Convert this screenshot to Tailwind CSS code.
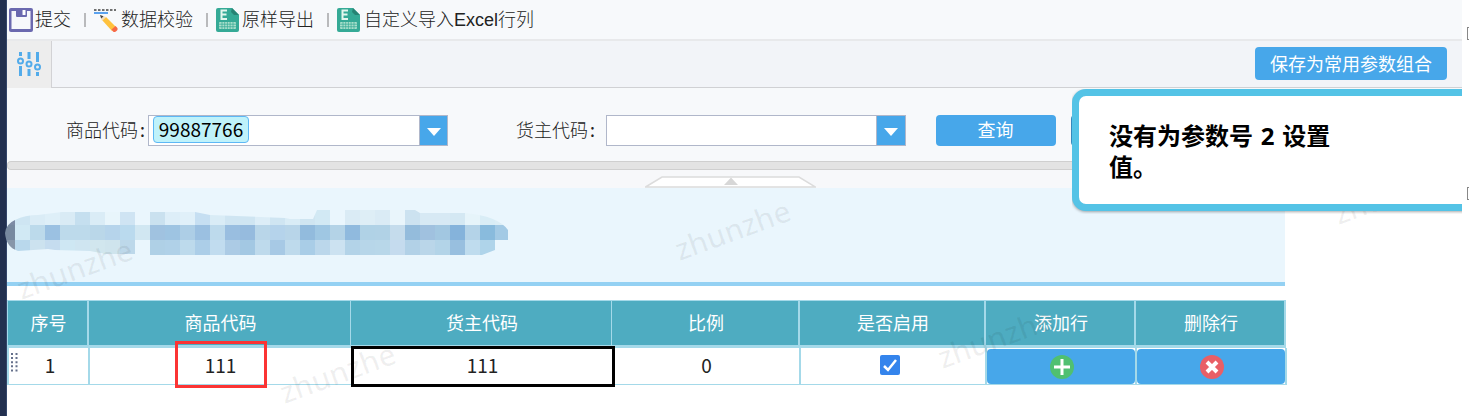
<!DOCTYPE html>
<html lang="zh"><head><meta charset="utf-8"><title>参数组合</title>
<script src="https://cdn.jsdelivr.net/npm/@tailwindcss/browser@4"></script></head>
<body class="bg-white font-['Noto_Sans','Noto_Sans_CJK_SC',sans-serif] text-[18px] text-[#222]">
<div class="relative flex h-[416px] w-[1469px] overflow-hidden bg-white">
  <div class="w-[7px] shrink-0 border-r border-[#34466a] bg-[#22304f]"></div>
  <main class="flex w-[1455px] shrink-0 flex-col">
    <header class="flex h-[41px] shrink-0 items-center border-b-2 border-[#e8e9eb] bg-[#f7f9fb] pl-[2px] font-['Liberation_Sans','Noto_Sans_CJK_SC',sans-serif] font-light leading-[24px]">
      <svg class="size-6 shrink-0" viewBox="0 0 24 24"><rect width="24" height="24" rx="2" fill="#6b69af"/><path d="M2.500 3V21H21.500V3H18V8Q18 9 17 9H8Q7 9 7 8V3Z" fill="#f7f8fb"/><rect x="13.500" y="2" width="3" height="5" rx=".5" fill="#fff"/></svg>
      <span class="ml-[2px] w-[49px] whitespace-nowrap">提交</span><i class="h-[14px] w-[2px] bg-[#b9babc]"></i>
      <svg class="ml-2 size-6 shrink-0" viewBox="0 0 24 24"><path d="M0 2H22" stroke="#444" stroke-width="1.500" stroke-dasharray="2.500 1.500"/><path d="M0 5H14" stroke="#5ba2ee" stroke-width="2"/><path d="M8 12L12 9 22 19 18 23Z" fill="#ffc23d"/><path d="M6 7L12 9 8 13Z" fill="#f2ddbf"/><path d="M6 7L9.500 8.200 7.200 10.500Z" fill="#444"/><path d="M17.500 21.500L21.500 18 23 19.500Q24.500 21 22.500 23T19 23.500Z" fill="#f66947"/></svg>
      <span class="ml-[3px] w-[85px] whitespace-nowrap">数据校验</span><i class="h-[14px] w-[2px] bg-[#b9babc]"></i>
      <svg class="ml-2 h-6 w-[23px] shrink-0" viewBox="0 0 23 24"><path d="M2 0H16L23 7V22Q23 24 21 24H2Q0 24 0 22V2Q0 0 2 0Z" fill="#35aa96"/><path d="M16 0L23 7H18L15 4Z" fill="#268374"/><path d="M11 2.500H5.500V11H11M5.500 6.500H10.500" fill="none" stroke="#e3f7ee" stroke-width="2"/><rect x="3" y="14" width="17" height="7" rx="1" fill="#a9dfcb"/><path d="M3 16.200H20M3 18.700H20M6 14V21M8.700 14V21M11.400 14V21M14.100 14V21M17 14V21" stroke="#35aa96" stroke-width=".7"/></svg>
      <span class="ml-[3px] w-[85px] whitespace-nowrap">原样导出</span><i class="h-[14px] w-[2px] bg-[#b9babc]"></i>
      <svg class="ml-2 h-6 w-[23px] shrink-0" viewBox="0 0 23 24"><path d="M2 0H16L23 7V22Q23 24 21 24H2Q0 24 0 22V2Q0 0 2 0Z" fill="#35aa96"/><path d="M16 0L23 7H18L15 4Z" fill="#268374"/><path d="M11 2.500H5.500V11H11M5.500 6.500H10.500" fill="none" stroke="#e3f7ee" stroke-width="2"/><rect x="3" y="14" width="17" height="7" rx="1" fill="#a9dfcb"/><path d="M3 16.200H20M3 18.700H20M6 14V21M8.700 14V21M11.400 14V21M14.100 14V21M17 14V21" stroke="#35aa96" stroke-width=".7"/></svg>
      <span class="ml-[4px] whitespace-nowrap">自定义导入Excel行列</span>
    </header>
    <div class="flex h-[47px] shrink-0">
      <div class="flex w-[45px] shrink-0 items-center justify-center border-r border-[#d2d2d5] bg-[#ededed]">
        <svg class="mb-[2px] size-6" viewBox="0 0 24 24" fill="none" stroke="#52abea" stroke-width="3"><path d="M3.500 0V4M3.500 14V24M12 0V7M12 17V24M20.500 0V10M20.500 20V24"/><g stroke-width="2"><circle cx="3.500" cy="9" r="2.500"/><circle cx="12" cy="12" r="2.500"/><circle cx="20.500" cy="15" r="2.500"/></g></svg>
      </div>
      <div class="flex flex-1 justify-end border-b border-[#d0d1d4] bg-[#f2f4f8] pr-[15px] pt-[6px]">
        <button class="h-[33px] w-[192px] rounded-[4px] bg-[#47a7ea] pt-[2px] text-white">保存为常用参数组合</button>
      </div>
    </div>
    <div class="flex h-[73px] shrink-0 items-start bg-[#f7f9fb] pt-[27px]">
      <label class="ml-[59px] w-[82px] whitespace-nowrap text-[18px] font-light leading-[30px]">商品代码<b class="ml-[2px] font-medium">:</b></label>
      <div class="flex h-[31px] w-[300px] border border-[#b0b7ca] bg-white">
        <div class="flex-1 pl-[4px]"><span class="flex h-[27px] w-[96px] items-center justify-center rounded-[4px] border border-[#5db8f5] bg-[#bff2fa] font-['Noto_Sans_CJK_SC',sans-serif] text-[19px] text-black">99887766</span></div>
        <div class="flex w-[28px] items-center justify-center border-l border-[#b0b7ca] bg-[#47a7ea]"><svg class="mt-[3px] h-[8px] w-[14px]" viewBox="0 0 14 8"><path d="M0 0H14L7 8Z" fill="white"/></svg></div>
      </div>
      <label class="ml-[68px] w-[90px] whitespace-nowrap text-[18px] font-light leading-[30px]">货主代码<b class="ml-[2px] font-medium">:</b></label>
      <div class="flex h-[31px] w-[300px] border border-[#b0b7ca] bg-white">
        <div class="flex-1"></div>
        <div class="flex w-[29px] items-center justify-center border-l border-[#b0b7ca] bg-[#47a7ea]"><svg class="mt-[3px] h-[8px] w-[14px]" viewBox="0 0 14 8"><path d="M0 0H14L7 8Z" fill="white"/></svg></div>
      </div>
      <button class="ml-[30px] h-[31px] w-[120px] rounded-[4px] bg-[#47a7ea] pr-px text-white">查询</button>
      <div class="ml-[15px] h-[31px] w-[120px] rounded-[4px] bg-[#3689bd]"></div>
    </div>
    <div class="h-[9px] shrink-0 rounded-l-[4px] border border-r-0 border-[#cfcfcf] bg-[#e3e3e3]"></div>
    <div class="flex h-[18px] shrink-0 items-end bg-[#f7f8fa] pl-[638px]">
      <svg class="h-[12px] w-[171px]" viewBox="0 0 171 12"><path d="M.5 11L17 1H154L170.500 11Z" fill="white" stroke="#dcdcdc" stroke-width="1.500"/><path d="M79 9L86 1.500 93 9Z" fill="#d7d7d7"/></svg>
    </div>
    <div class="h-[98px] w-[1278px] shrink-0 border-b-4 border-[#94d1f3] bg-[#eaf6fd]"></div>
    <section class="mt-[14px] w-[1280px] shrink-0">
      <div class="flex h-[48px] w-[1279px] border-b-[3px] border-l border-t border-[#a4d9e9] bg-[#4eacc1] text-center leading-[45px] text-white">
        <div class="w-[81px] border-r-2 border-[#a4d9e9] pl-[2px]">序号</div><div class="w-[262px] border-r border-[#a4d9e9] pl-[2px]">商品代码</div><div class="w-[261px] border-r border-[#a4d9e9] pl-[2px]">货主代码</div><div class="w-[188px] border-r-2 border-[#a4d9e9] pl-[2px]">比例</div><div class="w-[186px] border-r-2 border-[#a4d9e9] pl-[2px]">是否启用</div><div class="w-[150px] border-r-2 border-[#a4d9e9] pl-[2px]">添加行</div><div class="w-[150px] border-r-2 border-[#a4d9e9] pl-[2px]">删除行</div>
      </div>
      <div class="flex h-[37px] border-b border-l-2 border-[#a4d9e9] text-center font-['Noto_Sans_CJK_SC',sans-serif] text-[19px] leading-[34px]">
        <div class="flex w-[81px] border-r-2 border-[#a4d9e9]"><svg class="ml-[2px] mt-[5px] h-[19px] w-[8px] shrink-0" viewBox="0 0 8 19"><path d="M1 0V19M5.500 0V19" stroke="#65708b" stroke-width="2" stroke-dasharray="2 2.100"/></svg><span class="w-[62px]">1</span></div>
        <div class="w-[261px]">111</div><div class="w-[263px]">111</div><div class="w-[187px] border-r-2 border-[#a4d9e9]">0</div>
        <div class="flex w-[186px] items-center justify-center border-r-2 border-[#a4d9e9] pr-[6px]"><svg class="mb-[2px] size-5" viewBox="0 0 20 20"><rect width="20" height="20" rx="2" fill="#3484ec"/><path d="M4 11L8 15 16 5" fill="none" stroke="white" stroke-width="2.500"/></svg></div>
        <div class="w-[150px] border-r-2 border-[#a4d9e9] pt-px"><button class="flex h-[35px] w-full items-center justify-center rounded-[4px] bg-[#47a7ea] pl-[2px]"><svg class="size-6" viewBox="0 0 24 24"><circle cx="12" cy="12" r="12" fill="#50c071"/><path d="M4 12H20M12 4V20" stroke="white" stroke-width="3"/></svg></button></div>
        <div class="w-[150px] border-r-2 border-[#a4d9e9] pt-px"><button class="flex h-[35px] w-full items-center justify-center rounded-[4px] bg-[#47a7ea] pl-[2px]"><svg class="size-6" viewBox="0 0 24 24"><circle cx="12" cy="12" r="12" fill="#e95f66"/><path d="M7 7L17 17M17 7L7 17" stroke="white" stroke-width="4"/></svg></button></div>
      </div>
    </section>
  </main>
  <!-- pixelated redaction brush -->
  <svg class="absolute left-0 top-[205px] h-[55px] w-[520px]" viewBox="0 205 520 55" shape-rendering="crispEdges"><defs><clipPath id="brush"><path d="M5 233Q6 224 15 220Q25 215 38 215L62 212H135V225H150V212H195L210 215 285 218 290 219H313L317 210H415L420 213H465Q498 216 508 230V240H495V250L482 255H150V240H135V254H106L90 251 55 250 48 249 18 251Q6 247 5 233Z"/></clipPath></defs><g id="mosaic" clip-path="url(#brush)"></g></svg>
  <!-- page watermark -->
  <div class="pointer-events-none absolute inset-0 overflow-hidden text-[30px] font-medium leading-none text-black/6">
    <span class="absolute left-[14px] top-[254px] -rotate-20">zhunzhe</span><span class="absolute left-[277px] top-[358px] -rotate-20">zhunzhe</span><span class="absolute left-[672px] top-[215px] -rotate-20">zhunzhe</span><span class="absolute left-[935px] top-[323px] -rotate-20">zhunzhe</span><span class="absolute left-[1331px] top-[179px] -rotate-20">zhunzhe</span>
  </div>
  <div class="absolute left-[351px] top-[346px] h-[41px] w-[264px] border-[3px] border-black"></div>
  <div class="absolute left-[175px] top-[341px] h-[47px] w-[92px] border-[3px] border-[#fb3434]"></div>
  <div class="absolute left-[1072px] top-[89px] h-[125px] w-[390px] overflow-hidden"><div class="h-[122px] w-[410px] rounded-[14px] border-[7px] border-[#54c3e6] bg-white pl-[30px] pt-[24px] text-[24px] font-bold leading-[31px] text-black shadow-[0_1px_3px_#0005] [word-spacing:1.5px]">没有为参数号 2 设置<br>值。</div></div>
  <div class="absolute left-[1467px] top-[27px] h-[13px] w-[12px] border border-[#888]"></div>
  <div class="absolute left-[1467px] top-[187px] h-[13px] w-[12px] border border-[#888]"></div>
</div>
<script>
const rows=[
"7d8ba4 cee5f2 daecf6 deeff8 d9ebf5 c5dfef daecf6 e8f5fb cfe4f3 eaf6fd cae1ef ddeef8 e0f0f9 c6dff2 d9ecf6 cfe5f2 cfe5f2 dcedf7 cfe5f2 d9ecf6 cfe5f1 d2e9f4 eaf6fd daebf5 deeef6 daebf5 e9f5fb cce2f0 d7e9f4 d7e9f4 d4e8f3 e6f4fa d9edf6 dceef6",
"77899f d1e9f4 bcdaeb 9bc1e2 bddaeb bddaeb bad7e9 b6d4eb badaee d1e7f2 a0c2e0 9ec4e2 adcee6 9bc0e1 bddaec 99bee0 96bbde b9d6e9 b5d3eb b8d5e9 92bbdd 9fc7e3 b4d3e7 90bade b0d2e6 b1d2e6 c5dcec 94bcdc a0c1df a2c7e1 85b3db b4d3e8 89bbdd a3cae5",
"8796a9 b9d8ec cce2ef c5dcef cee7f3 cfe5f1 d1e6ee cfe4ed bdd8ea eaf6fd afd0e6 b0d1e8 bddaec accee8 c1dcef accbe5 a3c8e3 bedaec a7c9e5 bedaec a9cde7 bbd7eb cce2f1 b3d3e8 b7d6e9 b8d7e9 c5dbee b2d1e7 bad6e9 b3d4e8 98bfdf bfdcee afd4ea bddaec"];
const g=document.getElementById("mosaic");
rows.forEach((row,y)=>row.split(" ").forEach((c,x)=>{const r=document.createElementNS("http://www.w3.org/2000/svg","rect");r.setAttribute("x",x*15);r.setAttribute("y",210+y*15);r.setAttribute("width",15);r.setAttribute("height",15);r.setAttribute("fill","#"+c);g.appendChild(r)}));
</script>
</body></html>
